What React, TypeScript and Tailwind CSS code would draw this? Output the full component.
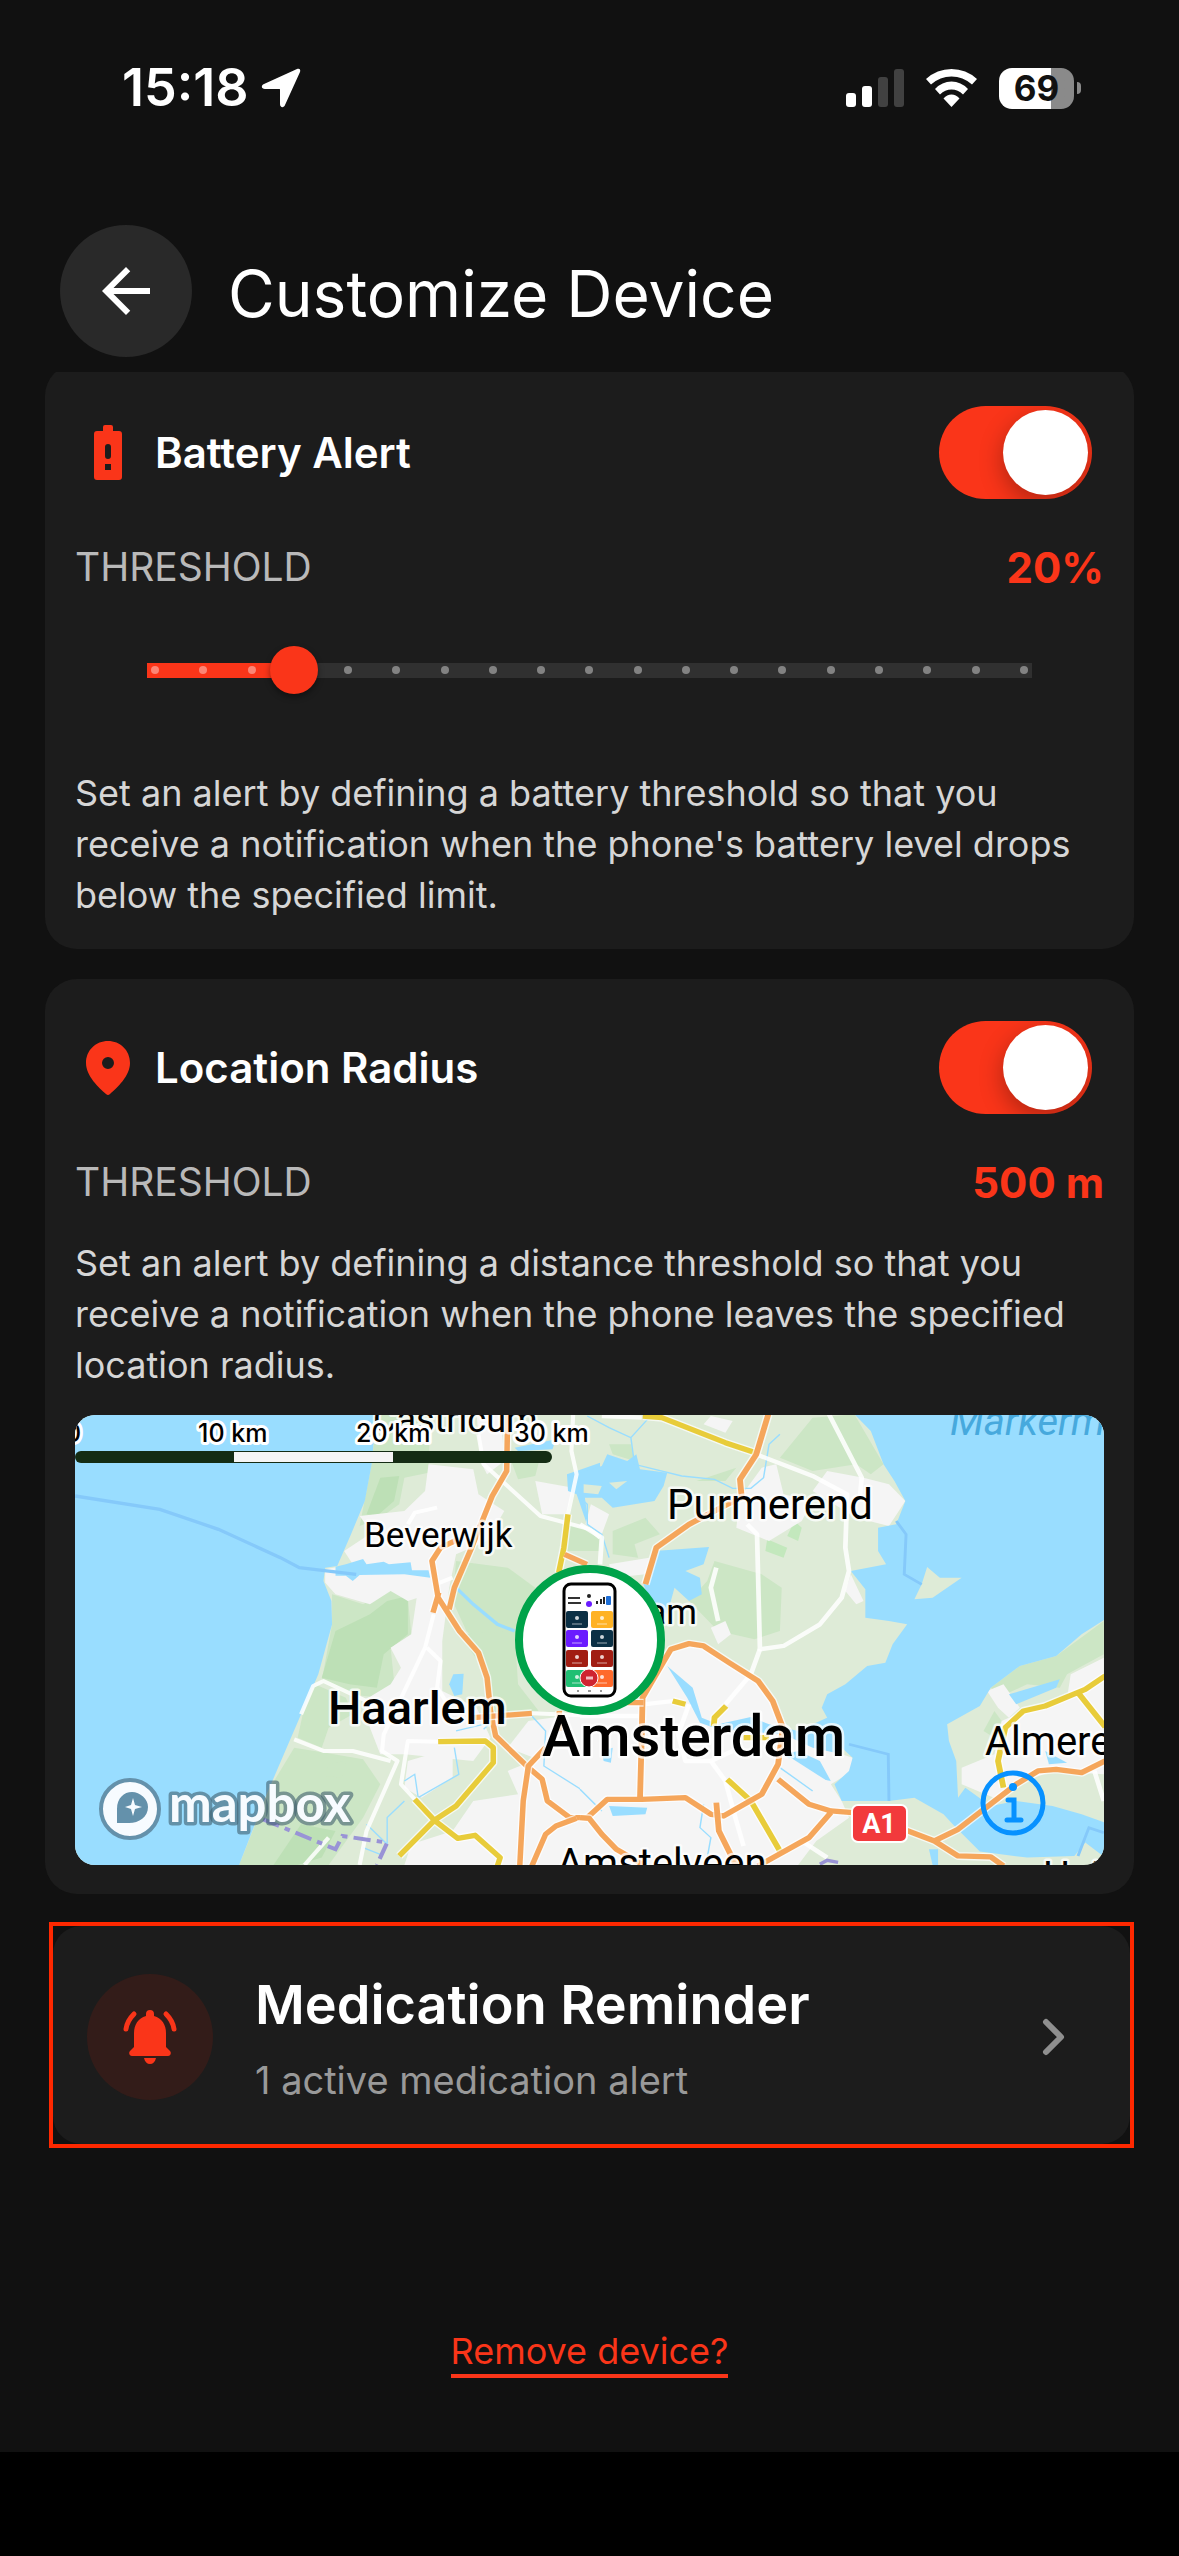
import React, { useState } from "react";
import { MdArrowBack } from "react-icons/md";

const BatteryIcon = () => (
  <svg viewBox="0 0 28 55" className="w-7 h-[55px]" aria-hidden="true">
    <path
      fill="#fa3519"
      fillRule="evenodd"
      d="M11 0h6a2 2 0 0 1 2 2v4h6a3 3 0 0 1 3 3v43a3 3 0 0 1-3 3H3a3 3 0 0 1-3-3V9a3 3 0 0 1 3-3h6V2a2 2 0 0 1 2-2ZM14 19a3 3 0 0 0-3 3v9a3 3 0 0 0 6 0v-9a3 3 0 0 0-3-3ZM11 39v6h6v-6Z"
    />
  </svg>
);

const PinIcon = () => (
  <svg viewBox="0 0 44 54" className="w-11 h-[54px]" aria-hidden="true">
    <path
      fill="#fa3519"
      fillRule="evenodd"
      d="M22 0C34 0 44 9 44 22c0 13-13 25-20 31q-2 2-4 0C13 47 0 35 0 22 0 9 10 0 22 0ZM22 16a6 6 0 1 0 0 12a6 6 0 0 0 0-12Z"
    />
  </svg>
);

const BellIcon = () => (
  <svg viewBox="0 0 54 54" className="w-[54px] h-[54px]" aria-hidden="true">
    <path
      fill="#fa3519"
      d="M27 0a4 4 0 0 1 4 4v2c8 2 12 9 12 17v14l4 4c2 2 0 5-2 5H9c-2 0-4-3-2-5l4-4V23C11 15 15 8 23 6V4a4 4 0 0 1 4-4ZM21 48h12c-1 4-3 6-6 6s-5-2-6-6Z"
    />
    <path
      d="M11 4Q4 11 3 19M43 4Q50 11 51 19"
      fill="none"
      stroke="#fa3519"
      strokeWidth="5"
      strokeLinecap="round"
    />
  </svg>
);

const StatusBar = () => (
  <div className="flex items-center justify-between h-[176px] pl-[122px] pr-[98px]">
    <div className="flex items-center gap-3">
      <span className="text-[52px] leading-[60px] font-semibold">15:18</span>
      <svg viewBox="0 0 40 40" className="w-10 h-10" aria-hidden="true">
        <path
          fill="#fff"
          d="M36 1c2-1 4 0 3 3L24 37c-1 3-5 3-5-1V22c0-1 0-1-1-1H4c-4 0-4-4-1-5Z"
        />
      </svg>
    </div>
    <div className="flex items-center gap-[22px]">
      <svg viewBox="0 0 58 38" className="w-[58px] h-[38px]" aria-hidden="true">
        <rect x="0" y="24" width="10" height="14" rx="3" fill="#fff" />
        <rect x="16" y="17" width="10" height="21" rx="3" fill="#fff" />
        <rect x="32" y="8" width="10" height="30" rx="3" fill="#414141" />
        <rect x="48" y="0" width="10" height="38" rx="3" fill="#414141" />
      </svg>
      <svg viewBox="0 0 51 38" className="w-[51px] h-[38px]" aria-hidden="true">
        <g fill="#fff">
          <path d="M0 10Q11 0 25.500 0T51 10L46 15.500Q37 7.500 25.500 7.500T5 15.500Z" />
          <path d="M9 20Q16 12.500 25.500 12.500T42 20L37 25.500Q32 20.500 25.500 20.500T14 25.500Z" />
          <path d="M17.500 29.500Q21 25.500 25.500 25.500T33.500 29.500L25.500 38Z" />
        </g>
      </svg>
      <div className="flex items-center gap-[3px]">
        <div className="flex items-center justify-center w-[75px] h-[41px] rounded-[13px] bg-linear-to-r from-white from-69% to-[#8a8a8a] to-69%">
          <span className="text-[35px] leading-[41px] font-bold text-[#111111]">
            69
          </span>
        </div>
        <div className="w-1 h-3 rounded-r-full bg-[#8a8a8a]" />
      </div>
    </div>
  </div>
);

type CardHeadProps = {
  id: string;
  title: string;
  icon: React.ReactNode;
};

const CardHead = ({ id, title, icon }: CardHeadProps) => {
  const [on, setOn] = useState(true);
  return (
    <label htmlFor={id} className="flex items-center pr-3 cursor-pointer">
      <span className="flex justify-center w-[66px]">{icon}</span>
      <span className="flex-1 pl-[14px] text-[42px] leading-[48px] font-semibold">
        {title}
      </span>
      <input
        id={id}
        type="checkbox"
        role="switch"
        checked={on}
        onChange={(e) => setOn(e.target.checked)}
        className="sr-only peer"
      />
      <span className="flex w-[153px] h-[93px] p-1 rounded-full overflow-hidden bg-[#444444] peer-checked:bg-[#fa3519] peer-checked:justify-end">
        <span className="w-[85px] h-[85px] rounded-full bg-white shadow-[0_8px_24px_rgba(0,0,0,0.3)]" />
      </span>
    </label>
  );
};

const Threshold = ({ value }: { value: string }) => (
  <div className="flex items-center justify-between h-[60px] mt-[38px]">
    <span className="text-[39px] text-[#b9b9b9]">THRESHOLD</span>
    <span className="text-[42px] font-bold text-[#fa3519]">{value}</span>
  </div>
);

const MIN = 5;
const MAX = 95;
const STEP = 5;

const ThresholdSlider = ({
  value,
  onChange,
}: {
  value: number;
  onChange: (v: number) => void;
}) => {
  const percent = ((value - MIN) / (MAX - MIN)) * 100;
  const dots = Array.from({ length: (MAX - MIN) / STEP + 1 });
  return (
    <div className="relative flex items-center h-12 mt-[49px] mb-[73px] mx-[72px]">
      <div className="w-full h-[15px] bg-[#303030]">
        <div className="h-full bg-[#fa3519]" style={{ width: `${percent}%` }} />
      </div>
      <div className="absolute inset-x-1 flex justify-between">
        {dots.map((_, i) => (
          <span key={i} className="w-2 h-2 rounded-full bg-white/40" />
        ))}
      </div>
      <div
        className="absolute w-12 h-12 rounded-full bg-[#fa3519] -translate-x-1/2 shadow-[0_3px_6px_rgba(0,0,0,0.4)]"
        style={{ left: `${percent}%` }}
      />
      <input
        type="range"
        aria-label="Battery threshold"
        min={MIN}
        max={MAX}
        step={STEP}
        value={value}
        onChange={(e) => onChange(Number(e.target.value))}
        className="absolute inset-0 w-full h-full opacity-0 cursor-pointer"
      />
    </div>
  );
};

// roads are drawn twice, a light casing first and the colour on top
const Road = ({ d, color }: { d: string; color: string }) => (
  <g fill="none" strokeLinejoin="round">
    <path d={d} stroke="#ffffff" strokeOpacity="0.7" strokeWidth="24" />
    <path d={d} stroke={color} strokeWidth="16" />
  </g>
);

const MapWest = () => (
  <g transform="translate(-15 -14) scale(0.3444 0.3333)">
    <g fill="#cce6c5">
      <path d="M920 40L1075 40 1070 215 1000 230 985 310 930 350 870 375 905 190Z" />
      <path d="M790 580L880 610 960 565 1010 590 1020 700 960 740 970 840 930 890 840 880 760 840 790 670Z" />
      <path d="M740 850L830 890 850 940 780 980 760 1040 690 1010 705 940Z" />
      <path d="M680 1040L770 1055 880 1075 930 1150 880 1250 780 1392 520 1392 610 1160Z" />
      <path d="M1150 480L1300 500 1380 560 1330 700 1250 760 1180 690 1140 600Z" />
      <path d="M1160 700L1320 690 1330 850 1390 930 1260 940 1240 820Z" />
      <path d="M1310 180L1390 185 1380 225 1330 235Z" />
      <path d="M1480 370L1568 400 1568 450 1470 450Z" />
      <path d="M780 1090L830 1080 820 1130 770 1125Z" />
    </g>
    <g fill="#bde0b6">
      <path d="M950 600L1010 585 1010 700 940 760 920 860 840 850 760 830 800 690 900 640Z" />
      <path d="M930 230L985 225 970 300 920 345 890 340Z" />
      <path d="M700 1270L800 1290 760 1370 690 1392 620 1392Z" />
    </g>
    <g fill="#f5f5f5">
      <path d="M1070 190L1200 205 1215 280 1290 330 1240 420 1150 460 1130 560 1070 580 1010 600 960 570 900 610 800 580 770 545 770 505 850 490 825 450 905 395 870 345 1000 330 1060 270Z" />
      <path d="M1040 560L1130 560 1110 720 1110 870 1210 920 1250 1010 1200 1080 1000 1060 930 1060 900 980 880 900 960 850 990 800 960 740 1020 700Z" />
      <path d="M1010 1080L1140 1040 1140 1130 1050 1190 1000 1160Z" />
      <path d="M1300 1110L1568 1000 1568 1392 1000 1392 1020 1330 1140 1290 1200 1200 1330 1180Z" />
      <path d="M1210 40L1280 40 1290 180 1240 220 1220 180Z" />
      <path d="M1380 240L1490 260 1470 340 1400 340Z" />
      <path d="M1360 960L1568 930 1568 1100 1400 1080 1300 1040Z" />
    </g>
    <path
      fill="#99ddff"
      d="M40 40L918 40 905 190 885 300 845 400 805 495 770 500 765 540 788 600 790 670 750 820 700 940 650 1060 600 1180 520 1392 40 1392Z"
    />
    <g fill="#99ddff">
      <path d="M800 497L830 490 880 474 890 490 940 482 955 490 1018 484 1022 508 1070 508 1075 530 1000 520 870 522 850 540 830 524 800 524Z" />
      <path d="M1142 820L1172 818 1168 880 1145 885 1130 850Z" />
      <path d="M1500 210L1568 185 1568 270 1520 260 1535 370 1568 400 1560 375 1530 370 1500 280 1475 270 1472 220Z" />
      <path d="M1320 140L1440 115 1430 145 1330 150Z" />
    </g>
    <g fill="none" stroke="#99ddff" strokeWidth="4">
      <path d="M1150 560L1200 610 1270 670 1320 690" strokeWidth="10" />
      <path d="M1370 945L1410 990 1405 1095 1520 1170 1568 1220" />
      <path d="M1145 1040L1158 1120 1040 1190 1030 1120 1000 1140" />
      <path d="M1000 1200L950 1250 950 1330 890 1270M880 1340L930 1360" />
      <path d="M1150 990L1250 965 1230 985" />
    </g>
    <g
      fill="none"
      stroke="#ffffff"
      strokeOpacity="0.85"
      strokeWidth="12"
      strokeLinejoin="round"
    >
      <path d="M1490 40L1485 150 1500 220 1475 340" />
      <path d="M1215 100L1230 190 1395 345 1540 385 1568 410" />
      <path d="M1085 640L1060 740 940 1000 935 1050 980 1080 890 1290 870 1392" />
      <path d="M680 1015L765 1050 850 1050 960 1080" />
      <path d="M1065 740L1105 780 1095 860 1120 900" />
      <path d="M700 940L735 855 765 840 890 900" />
      <path d="M1098 1022L1010 1020 990 1150 1030 1195" />
      <path d="M1090 550L1140 530M1370 937L1568 945" />
      <path d="M1095 320L1030 335 1010 370M780 1310L710 1392" />
    </g>
    <path
      d="M44 285L290 325 460 385 640 470 695 500 860 520"
      fill="none"
      stroke="#85c9fa"
      strokeWidth="10"
    />
    <path
      d="M590 1255L800 1345 820 1305 950 1325 920 1392"
      fill="none"
      stroke="#9993d6"
      strokeWidth="12"
      strokeDasharray="50 18 16 18"
    />
    <Road color="#e8cc3a" d="M1475 340L1463 440 1448 515" />
    <Road
      color="#e8cc3a"
      d="M1098 1022L1235 1020 1258 1040 1258 1085 1150 1215 1087 1258 985 1365M1030 1195L1087 1258 1155 1312 1205 1303 1278 1370 1270 1395"
    />
    <Road
      color="#f5a65b"
      d="M1300 40L1297 210 1255 285 1195 440 1145 560 1130 625M1150 418L1105 440 1080 480 1098 590 1160 690 1215 755 1240 830 1250 930 1265 1005 1355 1095 1400 1135 1415 1200 1480 1250 1530 1250 1590 1195M1083 635L1100 575"
    />
    <Road
      color="#f5a65b"
      d="M1410 1040L1360 1095 1345 1200 1335 1395M1370 1395L1410 1300 1440 1275 1500 1252M1530 1250L1590 1300M1200 950L1370 937M1465 460L1530 490M1450 930L1450 990"
    />
  </g>
);

const MapEast = () => (
  <g transform="translate(505 -14) scale(0.3635 0.3333)">
    <g fill="#cce6c5">
      <path d="M640 50L755 40 835 190 800 220 760 190 640 210 550 170Z" />
      <path d="M80 130L140 130 150 180 90 160ZM320 240L430 200 400 240Z" />
      <path d="M370 480L500 520 555 560 550 690 480 715 380 690 300 600 350 540Z" />
      <path d="M90 390L180 350 220 400 150 430 160 470 90 460Z" />
      <path d="M130 1220L200 1230 200 1320 130 1320Z" />
      <path d="M1130 860L1210 795 1310 765 1441 660 1441 760 1340 820 1320 860 1230 850 1160 885Z" />
      <path d="M1140 930L1160 960 1140 1010 1110 990Z" />
      <path d="M600 1040L640 1050 600 1010Z" />
    </g>
    <path fill="#c3e8bd" d="M515 415L570 440 560 470 510 450ZM590 360L610 380 600 420 570 405Z" />
    <g fill="#f5f5f5">
      <path d="M0 950L180 890 240 760 320 730 480 830 550 930 580 1010 750 1070 750 1110 690 1150 720 1200 740 1250 650 1320 600 1392 0 1392Z" />
      <path d="M440 290L500 200 540 190 560 280 640 300 610 360 520 420 430 380Z" />
      <path d="M680 210L780 230 850 250 895 300 850 375 760 350 640 270Z" />
      <path d="M745 520L780 600 760 610 730 570ZM360 680L400 660 415 700 380 730Z" />
      <path d="M360 45L420 60 400 95 340 70ZM30 310L80 340 60 400 15 370Z" />
      <path d="M80 490L190 470 180 520 90 530Z" />
      <path d="M1350 820L1441 770 1441 1120 1300 1110 1200 1150 1160 1200 1050 1150 1050 1100 1140 1060 1160 960 1220 930 1340 890Z" />
      <path d="M1120 870L1165 850 1210 920 1180 950 1150 920Z" />
    </g>
    <g fill="#99ddff">
      <path d="M755 40L1445 40 1445 655 1380 700 1310 765 1210 795 1130 860 1100 915 1010 970 1015 1020 1035 1080 1040 1190 1060 1160 1130 1215 1200 1200 1300 1215 1380 1240 1445 1265 1445 1370 1390 1325 1360 1365 1230 1370 1100 1352 1030 1275 1000 1240 920 1190 850 1200 720 1200 700 1150 740 1110 750 1070 690 1010 700 990 665 920 680 880 730 850 790 795 840 785 860 730 900 670 850 660 785 650 785 565 745 510 842 490 820 450 820 380 870 370 895 300 865 240 835 190 800 90Z" />
      <path d="M0 215L60 195 75 160 130 180 155 160 165 205 240 215 230 255 205 300 90 320 60 290 0 290Z" />
      <path d="M205 450L355 438 340 490 290 510 330 530 335 580 300 600 260 560 240 640 190 600 175 550Z" />
      <path d="M240 795L310 860 335 950 380 970 470 948 520 970 600 990 690 945 720 1060 640 1040 560 1000 380 985 330 965 295 890Z" />
      <path d="M600 1050L660 1080 690 1140 640 1130 560 1060Z" />
      <path d="M80 1215L185 1220 180 1240 90 1245ZM1180 880L1320 835 1310 860 1200 910Z" />
      <path d="M60 1050L90 1040 85 1085 65 1080ZM960 1345L985 1345 985 1392 970 1392Z" />
      <path d="M1280 1050L1340 1085 1290 1090Z" />
    </g>
    <g fill="#deebd7">
      <path d="M955 498L990 530 1050 530 970 590 920 595 940 550Z" />
      <path d="M80 245L130 240 100 265ZM10 250L60 255 50 280 10 275Z" />
    </g>
    <path fill="#f5f5f5" d="M580 1070L680 1140 660 1160 560 1080Z" />
    <g fill="none" stroke="#99ddff" strokeWidth="4">
      <path d="M20 45L80 80 140 110 150 190 280 225 370 235 420 262 470 262 505 230 520 130 550 100M140 110L190 50" />
      <path d="M0 290L20 310 20 370 60 400 80 470" />
      <path d="M550 1100L640 1170M340 1210L330 1280 360 1310 350 1370M0 1165L60 1230" />
    </g>
    <g
      fill="none"
      stroke="#ffffff"
      strokeOpacity="0.85"
      strokeWidth="13"
      strokeLinejoin="round"
    >
      <path d="M685 40L775 230 770 290" />
      <path d="M485 160L640 225 735 280 730 440 740 510 720 590 660 670 560 735 495 745 487 400 460 370" />
      <path d="M495 745L470 820 400 910M360 1080L400 1140 430 1260 450 1335" />
      <path d="M0 370L60 410 55 490M375 500L360 560 380 660M175 910L260 900" />
      <path d="M0 945L170 945M300 910L270 1000 290 1080 360 1080 420 1050" />
      <path d="M610 1320L680 1370M1415 1110L1441 1200M60 45L170 50" />
    </g>
    <path
      d="M870 360L897 400 892 520 940 550M740 1030L848 1060 850 1200M1370 1365L1400 1280 1441 1295"
      fill="none"
      stroke="#85c9fa"
      strokeWidth="8"
    />
    <path d="M660 1390L680 1378 710 1384" fill="none" stroke="#9993d6" strokeWidth="10" />
    <Road
      color="#e8cc3a"
      d="M173 45L225 50 400 125 487 157M405 1135L470 1200 550 1350M402 915L370 950 368 975M255 900L290 910M450 1010L520 1010"
    />
    <Road
      color="#e8cc3a"
      d="M1445 825L1390 865 1280 915 1220 930 1170 980 1150 1080 1165 1160M1370 875L1445 978"
    />
    <Road
      color="#f5a65b"
      d="M518 40L485 160 440 235 445 290 405 310 300 370 210 440 180 550M0 1250L20 1250 75 1195 170 1195 290 1190 360 1240 395 1245 500 1180 545 1090 558 980 530 900 490 840 410 785 340 735 300 728 250 745 220 800 172 890 170 1000 165 1195"
    />
    <Road
      color="#f5a65b"
      d="M0 1250L25 1252 60 1300 100 1345 180 1395M375 1205L382 1290 430 1395M545 1135L630 1210 690 1230 750 1235M690 1235L630 1310 490 1395M890 1285L975 1320 1040 1285 1200 1150 1260 1110 1310 1105 1380 1115 1445 1080M975 1320L1040 1365 1130 1368 1165 1395M130 905L175 905"
    />
  </g>
);

const tiles = [
  { x: 491, y: 196, fill: "#0b3045" },
  { x: 516, y: 196, fill: "#ffb224" },
  { x: 491, y: 215, fill: "#6a1bff" },
  { x: 516, y: 215, fill: "#0b3045" },
  { x: 491, y: 235, fill: "#a11d12" },
  { x: 516, y: 235, fill: "#a11d12" },
  { x: 491, y: 255, fill: "#20bf73" },
  { x: 516, y: 255, fill: "#ff6a2b" },
];

const DeviceMarker = () => (
  <g>
    <circle cx="515" cy="225" r="71" fill="#fff" stroke="#00a34a" strokeWidth="8" />
    <rect x="489" y="169" width="51" height="112" rx="7" fill="#fff" stroke="#000" strokeWidth="3" />
    <path d="M493 183h12M493 188h13" stroke="#333" strokeWidth="2" />
    <circle cx="514" cy="181" r="2" fill="#222" />
    <circle cx="514" cy="189" r="3" fill="#6a1bff" />
    <path d="M522 189v-3M526 189v-5M529 189v-7" stroke="#222" strokeWidth="2" />
    <rect x="531" y="181" width="5" height="9" rx="1" fill="#1f6fd6" />
    {tiles.map((t) => (
      <g key={`${t.x}-${t.y}`}>
        <rect x={t.x} y={t.y} width="22" height="17" rx="2" fill={t.fill} />
        <circle cx={t.x + 11} cy={t.y + 7} r="2" fill="#fff" fillOpacity="0.8" />
        <path d={`M${t.x + 6} ${t.y + 13}h10`} stroke="#fff" strokeOpacity="0.6" />
      </g>
    ))}
    <circle cx="514" cy="263" r="9" fill="#cf2430" stroke="#fff" />
    <path d="M511 263h7" stroke="#fff" strokeWidth="3" strokeOpacity="0.7" />
    <path d="M502 276h2M513 276h3M525 276h2" stroke="#333" />
  </g>
);

const RadiusMap = () => (
  <div className="relative mt-6 overflow-hidden rounded-[20px]">
    <svg
      viewBox="0 0 1029 450"
      preserveAspectRatio="xMidYMid slice"
      className="block w-full h-[450px]"
      role="img"
      aria-label="Map of the area around Amsterdam"
    >
      <rect width="1029" height="450" fill="#deebd7" />
      <MapWest />
      <MapEast />
      <g
        className="font-['Roboto',sans-serif]"
        stroke="#fff"
        strokeOpacity="0.75"
        strokeWidth="5"
        strokeLinejoin="round"
        paintOrder="stroke"
      >
        <text x="298" y="17" fontSize="36">Castricum</text>
        <text x="289" y="132" fontSize="35">Beverwijk</text>
        <text x="592" y="104" fontSize="42">Purmerend</text>
        <text x="253" y="309" fontSize="47" fontWeight="500">Haarlem</text>
        <text x="467" y="341" fontSize="58" fontWeight="500">Amsterdam</text>
        <text x="910" y="340" fontSize="40">Almere</text>
        <text x="622" y="209" fontSize="35" textAnchor="end">Zaandam</text>
        <text x="482" y="462" fontSize="40">Amstelveen</text>
        <text x="968" y="474" fontSize="38">Huizen</text>
      </g>
      <text
        x="875"
        y="20"
        fontSize="40"
        fontStyle="italic"
        fill="#47a9dd"
        className="font-['Roboto',sans-serif]"
      >
        Markermeer
      </text>
      <rect x="777" y="390" width="55" height="37" rx="6" fill="#f23a3c" stroke="#fff" strokeWidth="2" />
      <text x="804" y="418" fontSize="27" fontWeight="700" fill="#fff" textAnchor="middle" className="font-['Roboto',sans-serif]">
        A1
      </text>

      {/* distance scale */}
      <rect x="0" y="36" width="477" height="12" rx="6" fill="#142c14" />
      <rect x="159" y="37" width="159" height="10" fill="#f5f5f5" />
      <g
        fontSize="25"
        fontWeight="500"
        stroke="#fff"
        strokeWidth="6"
        strokeLinejoin="round"
        paintOrder="stroke"
      >
        <text x="-10" y="27">0</text>
        <text x="123" y="27">10 km</text>
        <text x="281" y="27">20 km</text>
        <text x="439" y="27">30 km</text>
      </g>

      {/* mapbox wordmark */}
      <circle cx="55" cy="394" r="29" fill="#f7fbff" stroke="#6491ab" strokeWidth="4" />
      <path
        fill="#6491ab"
        d="M42 408V394C42 383 49 377 57 377S73 384 73 392C73 402 64 408 54 408ZM58 383L56 390 50 392 56 394 58 401 60 394 67 392 60 390Z"
        fillRule="evenodd"
      />
      <text
        x="94"
        y="407"
        fontSize="51"
        fontWeight="700"
        fill="#f7fbff"
        stroke="#3f5f6e"
        strokeOpacity="0.6"
        strokeWidth="7"
        strokeLinejoin="round"
        paintOrder="stroke"
        className="font-['Lato',sans-serif]"
      >
        mapbox
      </text>
      <DeviceMarker />
    </svg>
    <button
      type="button"
      aria-label="Map information"
      className="absolute right-[58px] bottom-[29px]"
    >
      <svg viewBox="0 0 66 66" className="w-[66px] h-[66px]" aria-hidden="true">
        <g fill="none" stroke="#0791ff" strokeWidth="5">
          <circle cx="33" cy="33" r="30" />
          <path d="M28 30h6v20M27 50h14" strokeLinecap="round" />
        </g>
        <circle cx="33" cy="17" r="4" fill="#0791ff" />
      </svg>
    </button>
  </div>
);

export default function App() {
  const [battery, setBattery] = useState(20);

  return (
    <div className="min-h-screen bg-black text-white font-['Inter',sans-serif]">
      <div className="bg-[#111111] pb-[74px]">
        <StatusBar />

        <header className="flex items-center gap-9 pt-[49px] pb-[15px] px-[60px]">
          <button
            type="button"
            aria-label="Back"
            className="flex items-center justify-center w-[132px] h-[132px] rounded-full bg-[#292929]"
          >
            <MdArrowBack className="w-[72px] h-[72px]" />
          </button>
          <h1 className="text-[64px] leading-[80px] pt-[6px]">Customize Device</h1>
        </header>

        <main className="px-[45px] overflow-hidden">
          <section className="-mt-2 px-[30px] pt-[42px] pb-7 rounded-[32px] bg-[#1c1c1c]">
            <CardHead id="battery-alert" title="Battery Alert" icon={<BatteryIcon />} />
            <Threshold value={`${battery}%`} />
            <ThresholdSlider value={battery} onChange={setBattery} />
            <p className="pt-px text-[36px] leading-[51px] text-[#d6d6d6]">
              Set an alert by defining a battery threshold so that you receive a
              notification when the phone's battery level drops below the
              specified limit.
            </p>
          </section>

          <section className="mt-[30px] px-[30px] pt-[42px] pb-[29px] rounded-[32px] bg-[#1c1c1c]">
            <CardHead id="location-radius" title="Location Radius" icon={<PinIcon />} />
            <Threshold value="500 m" />
            <p className="mt-[26px] text-[36px] leading-[51px] text-[#d6d6d6]">
              Set an alert by defining a distance threshold so that you receive a
              notification when the phone leaves the specified location radius.
            </p>
            <RadiusMap />
          </section>

          <div className="mt-7 ml-1 border-4 border-[#ff2800]">
            <button
              type="button"
              className="flex items-center w-full h-[218px] pt-1 pl-[34px] pr-[63px] text-left rounded-[28px] bg-[#1c1c1c]"
            >
              <span className="flex items-center justify-center w-[126px] h-[126px] rounded-full bg-[#331c19]">
                <BellIcon />
              </span>
              <span className="flex flex-col flex-1 gap-3 pl-[42px] pt-2">
                <span className="text-[54px] leading-[66px] font-semibold">
                  Medication Reminder
                </span>
                <span className="text-[38px] leading-[60px] text-[#999999]">
                  1 active medication alert
                </span>
              </span>
              <svg viewBox="0 0 26 40" className="w-[26px] h-10" aria-hidden="true">
                <path
                  d="M5 5L20 20 5 35"
                  fill="none"
                  stroke="#8f8f8f"
                  strokeWidth="6"
                  strokeLinecap="round"
                  strokeLinejoin="round"
                />
              </svg>
            </button>
          </div>

          <div className="flex justify-center mt-[180px]">
            <a
              href="#remove"
              className="border-b-4 border-[#fa3519] text-[36px] leading-[46px] text-[#fa3519]"
            >
              Remove device?
            </a>
          </div>
        </main>
      </div>
    </div>
  );
}
